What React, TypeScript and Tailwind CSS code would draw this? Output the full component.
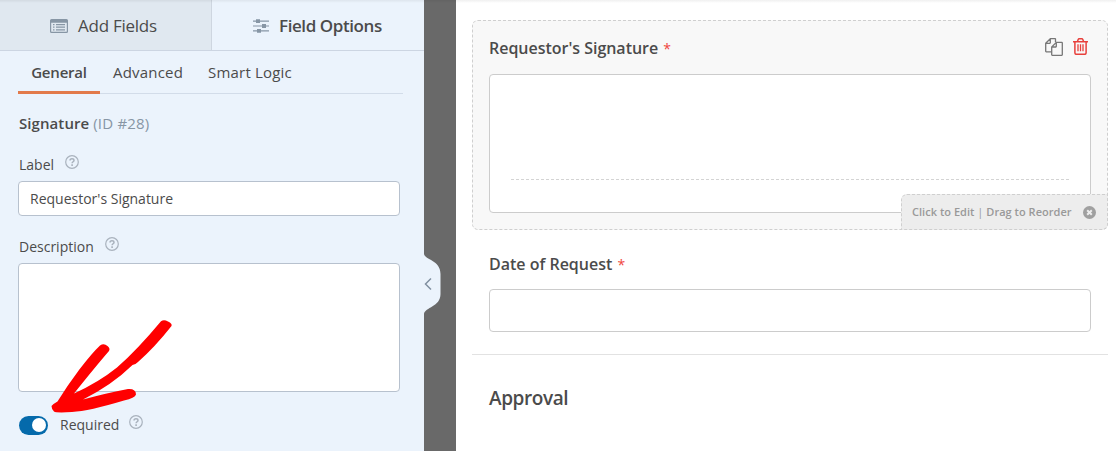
import { useState, type ReactNode } from "react"

function ListIcon() {
  return (
    <svg className="shrink-0" width="18" height="14" viewBox="0 0 18 14" fill="#8796a5">
      <path fillRule="evenodd" d="M1.5 0h15A1.5 1.5 0 0 1 18 1.5v11a1.5 1.5 0 0 1-1.5 1.5h-15A1.5 1.5 0 0 1 0 12.500v-11A1.500 1.500 0 0 1 1.500 0ZM1.200 3.800v8.400c0 .4.200.6.600.6h14.400c.4 0 .6-.2.600-.6V3.800Z" />
      <path d="M3 5h1.500v1.200H3zM6 5h9v1.200H6zM3 7.600h1.500v1.200H3zM6 7.600h9v1.200H6zM3 10.200h1.500v1.200H3zM6 10.200h9v1.200H6z" />
    </svg>
  )
}

function SlidersIcon() {
  return (
    <svg className="shrink-0" width="16" height="14" viewBox="0 0 16 14" fill="#8796a5">
      <path d="M0 1.500h16v1.200H0zM0 6.400h16v1.200H0zM0 11.300h16v1.200H0z" />
      <path d="M3 .2h4v3.800H3zM9 5.100h4v3.800H9zM4 10h4v3.800H4z" />
    </svg>
  )
}

function HelpIcon() {
  return (
    <svg className="shrink-0" width="14" height="14" viewBox="0 0 14 14" fill="none" stroke="#a9b2bd">
      <circle cx="7" cy="7" r="6.300" strokeWidth="1.200" />
      <path d="M5 5.500C5 4.300 5.800 3.700 7 3.700s2 .7 2 1.700c0 1.300-1.900 1.400-1.900 2.900" strokeWidth="1.500" />
      <path d="M7.100 9.300v1.600" strokeWidth="1.600" />
    </svg>
  )
}

function CopyIcon() {
  return (
    <svg width="18" height="18" viewBox="0 0 18 18" fill="none" stroke="#777" strokeWidth="1.300" strokeLinejoin="round">
      <path d="M10.500 4.200V1.200Q10.500.7 10 .7H5.300L.7 5.300v8q0 .5.500.5H6.500M5.300.7v4.100q0 .5-.5.500H.7" />
      <path d="M11.300 4.400h5.500q.5 0 .5.500v11.900q0 .5-.5.500H7.200q-.5 0-.5-.5V9zM11.300 4.400v4.100q0 .5-.5.500H6.700" />
    </svg>
  )
}

function TrashIcon() {
  return (
    <svg width="15" height="17" viewBox="0 0 15 17" fill="none" stroke="#e8403c" strokeWidth="1.500">
      <path d="M0 3.700h15M1.900 3.700v11.100q0 1.500 1.300 1.500h8.600q1.300 0 1.300-1.500V3.700M4.400 3.500l.8-2q.3-.8 1-.8h2.600q.7 0 1 .8l.8 2" />
      <path d="M5 6.300v7M7.500 6.300v7M10 6.300v7" strokeWidth="1.300" />
    </svg>
  )
}

function CloseIcon() {
  return (
    <svg width="13" height="13" viewBox="0 0 13 13">
      <circle cx="6.500" cy="6.500" r="6.500" fill="#a0a0a0" />
      <path d="m4.200 4.200 4.600 4.600m0-4.600-4.600 4.600" stroke="#ededed" strokeWidth="2" />
    </svg>
  )
}

// Hand drawn arrow pointing at the toggle
function Arrow() {
  return (
    <svg className="pointer-events-none absolute left-[50px] top-[318px]" width="126" height="96" viewBox="0 0 126 96" fill="red">
      <path d="M111 3.200Q114 1 118 3.500Q122.500 5.500 121.500 8Q105 29 88 44Q85 47 82.500 47Q62 67 33 81.500Q57 75 78 71Q86 70.500 86 76.500Q85 80 74 82.500Q39 93 22 94Q6 95 4 93.500Q1.500 91 1.500 88Q3 86 7.500 83.500Q17 68 29 52Q42 35 50 27.500Q54 25 57.500 28Q60.500 30.500 59 33Q46 48 24 75.500Q49 64 67 49.500Q87 32 111 3.200Z" />
    </svg>
  )
}

function FieldLabel({ children }: { children: ReactNode }) {
  return (
    <div className="flex h-5 gap-[11px] pl-[1px]">
      <span className="leading-5">{children}</span>
      <HelpIcon />
    </div>
  )
}

function Asterisk() {
  return <span className="ml-[1px] text-[14px] font-normal leading-none text-[#f0453c]">*</span>
}

export default function App() {
  const [label, setLabel] = useState("Requestor's Signature")
  const [required, setRequired] = useState(true)

  return (
    <div className="relative flex h-[451px] w-[1116px] overflow-hidden bg-[#696969] font-['Open_Sans','Noto_Sans',sans-serif] text-[14px] text-[#4b4b4b]">
      {/* Sidebar */}
      <aside className="h-full w-[424px] shrink-0 bg-[#ebf3fc]">
        <div className="flex h-[51px] border-b border-[#ccd5e2] text-[17px]">
          <button className="flex w-[212px] items-center gap-[10px] border-r border-[#ced6e0] bg-[#e0e8f0] pl-[50px] pt-[2px]">
            <ListIcon />
            <span className="tracking-[-0.25px]">Add Fields</span>
          </button>
          <button className="flex flex-1 items-center gap-[10px] pl-[41px] pt-[2px]">
            <SlidersIcon />
            <span className="font-semibold tracking-[-0.42px]">Field Options</span>
          </button>
        </div>

        <nav className="ml-[18px] flex h-[43px] w-[385px] border-b border-[#d2dce9] text-[15px]">
          <button className="h-[43px] w-[82px] border-b-3 border-[#e27a4b] pt-[2px] font-semibold tracking-[-0.2px]">General</button>
          <button className="ml-[13px] w-[70px] whitespace-nowrap pt-[1px] text-left tracking-[0.2px]">Advanced</button>
          <button className="ml-[25px] whitespace-nowrap pt-[1px] tracking-[0.2px]">Smart Logic</button>
        </nav>

        <div className="pl-[18px]">
          <p className="ml-[1px] mt-[19px] h-5 text-[15px] leading-5">
            <span className="font-semibold tracking-[0.08px]">Signature</span> <span className="tracking-[0.2px] text-[#8796a5]">(ID #28)</span>
          </p>

          <div className="mt-[22px]">
            <FieldLabel>Label</FieldLabel>
            <input
              value={label}
              onChange={e => setLabel(e.target.value)}
              className="mt-[6px] block h-[35px] w-[382px] rounded-[4px] border border-[#b7c1ce] bg-white px-[11px] outline-none"
            />
          </div>

          <div className="mt-[21px]">
            <FieldLabel>Description</FieldLabel>
            <textarea className="mt-[6px] block h-[129px] w-[382px] resize-none rounded-[4px] border border-[#b7c1ce] bg-white p-[11px] outline-none" />
          </div>

          <div className="mt-[23px] flex h-5 items-center">
            <button
              onClick={() => setRequired(!required)}
              className={`ml-[1px] flex h-[19px] w-[29px] shrink-0 items-center rounded-full px-[2px] ${required ? "justify-end bg-[#056aab]" : "bg-gray-400"}`}>
              <span className="h-[14px] w-[14px] rounded-full bg-white" />
            </button>
            <div className="ml-[12px] flex gap-[10px]">
              <span className="leading-5">Required</span>
              <HelpIcon />
            </div>
          </div>
        </div>
      </aside>

      {/* Collapse handle sits on the gutter */}
      <svg className="absolute left-[423px] top-[254px]" width="19" height="60" viewBox="0 0 19 60">
        <path d="M0 0h1c1 6 16.500 6 16.500 20v20c0 13-15.500 13-16.500 20H0Z" fill="#ebf3fc" />
        <path d="m8 24.500-5.500 5.500 5.500 5.500" fill="none" stroke="#8090a0" strokeWidth="1.500" />
      </svg>

      {/* Form preview */}
      <main className="ml-[32px] h-full flex-1 bg-white pl-4 pt-5">
        <section className="relative h-[210px] w-[636px] rounded-[6px] border border-dashed border-[#cfcfcf] bg-[#f8f8f8] px-4">
          <div className="flex h-[53px] items-center justify-between pr-[3px] pt-[1px]">
            <p className="text-[16px] font-semibold tracking-[-0.02px]">
              Requestor's Signature <Asterisk />
            </p>
            <div className="flex items-center gap-[10px] pb-[3px]">
              <CopyIcon />
              <TrashIcon />
            </div>
          </div>
          <div className="h-[139px] w-[602px] rounded-[4px] border border-[#cccccc] bg-white px-[21px] pt-[104px]">
            <div className="border-t border-dashed border-[#d4d4d4]" />
          </div>
          <div className="absolute -bottom-px -right-px flex h-[36px] w-[207px] items-center rounded-br-[6px] rounded-tl-[6px] border border-dashed border-[#cfcfcf] bg-[#ededed] pl-[10px] text-[11px] font-semibold text-[#999]">
            <span className="w-[171px] whitespace-nowrap tracking-[0.03px]">
              Click to Edit <span className="font-normal">|</span> Drag to Reorder
            </span>
            <CloseIcon />
          </div>
        </section>

        <section className="h-[125px] w-[636px] border-b border-[#e2e2e2] px-[17px] pt-[22px]">
          <p className="h-6 text-[16px] font-semibold leading-6">
            Date of Request <Asterisk />
          </p>
          <input className="mt-[13px] block h-[43px] w-[602px] rounded-[4px] border border-[#cccccc] bg-white px-3 outline-none" />
        </section>

        <h2 className="ml-[17px] mt-[29px] text-[19px] font-semibold leading-7 tracking-[-0.42px]">Approval</h2>
      </main>

      <Arrow />
      <div className="absolute inset-x-0 top-0 h-[3px] bg-linear-to-b from-black/6 to-transparent" />
    </div>
  )
}
